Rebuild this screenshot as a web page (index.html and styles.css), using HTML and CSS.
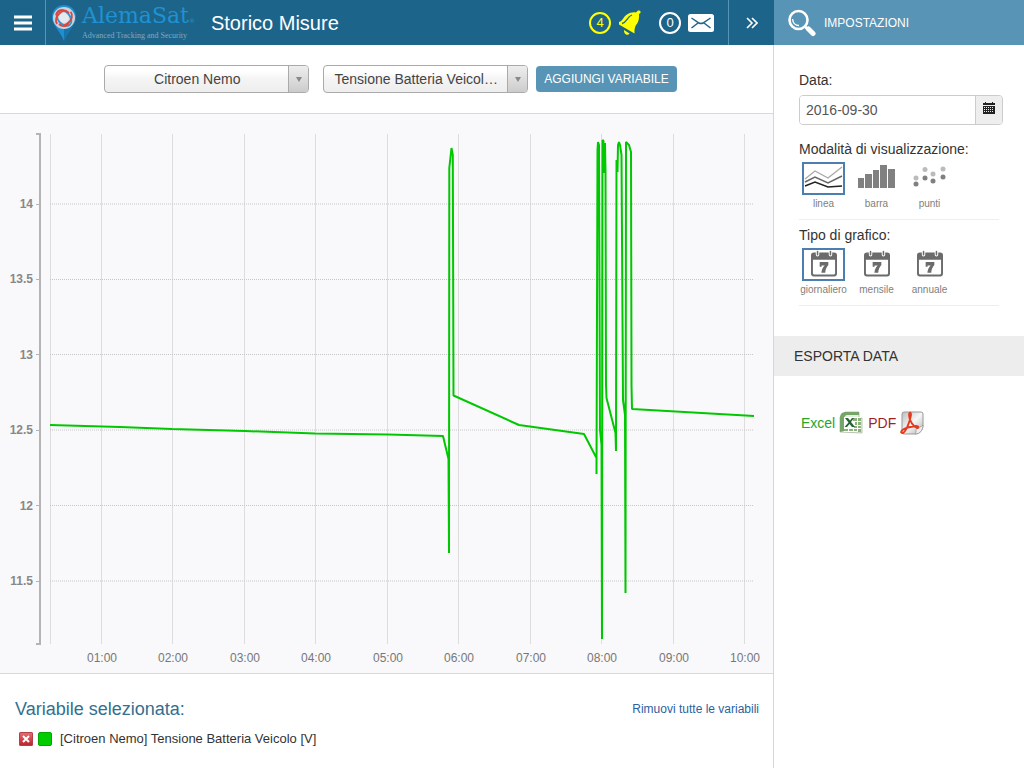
FILE: index.html
```html
<!DOCTYPE html>
<html lang="it">
<head>
<meta charset="utf-8">
<title>Storico Misure</title>
<link rel="stylesheet" href="styles.css">
</head>
<body>
<svg class="sprite" aria-hidden="true">
  <symbol id="calendar" viewBox="0 0 27 27">
    <path fill="#6b6b6b" fill-rule="evenodd" d="M3 2h2v2.500a1.800 1.800 0 0 0 3.600 0V2h9.800v2.500a1.800 1.800 0 0 0 3.600 0V2h2a3 3 0 0 1 3 3v19a3 3 0 0 1-3 3H3a3 3 0 0 1-3-3V5a3 3 0 0 1 3-3zM2 9.500v14a1.500 1.500 0 0 0 1.500 1.500h20A1.500 1.500 0 0 0 25 23.500v-14z"/>
    <path stroke="#6b6b6b" stroke-width="1.600" stroke-linecap="round" d="M6.800 1v3.500M20.200 1v3.500"/>
    <path fill="#6b6b6b" d="M9 12h9v3c-2 2.200-3 4.600-3.200 8h-4c.2-3 1.400-5.500 3.400-7.500H11V17H9z"/>
  </symbol>
</svg>
<div class="app">
  <main class="main">
    <header class="topbar">
      <button class="menu" aria-label="Menu"><svg width="18" height="16" viewBox="0 0 18 16"><path stroke="#fff" stroke-width="3" d="M0 2h18M0 8h18M0 14h18"/></svg></button>
      <div class="logo">
        <svg width="26" height="38" viewBox="0 0 26 38">
          <path fill="#1e8fd0" d="M13 1C6 1 1 6.500 1 13c0 8 7 12 12 24 5-12 12-16 12-24C25 6.500 20 1 13 1z"/>
          <path fill="#1675ad" d="M13 25v12c5-12 12-16 12-24z"/>
          <circle cx="13" cy="14" r="11" fill="#c8d3dc"/>
          <circle cx="13" cy="14" r="5" fill="#e3e9ed"/>
          <g fill="none" stroke-width="1.800">
            <ellipse cx="13" cy="14" rx="9" ry="6" transform="rotate(50 13 14)" stroke="#2798d4"/>
            <ellipse cx="13" cy="14" rx="9" ry="6.500" transform="rotate(-40 13 14)" stroke="#e2443d" stroke-dasharray="17 7"/>
            <path stroke="#e2443d" d="M5 11c2-6 9-6 13-2M8 20c4 4 9 2 10-2"/>
          </g>
        </svg>
        <div class="brand"><span class="brand-name">AlemaSat<small>®</small></span><span class="brand-tag">Advanced Tracking and Security</span></div>
      </div>
      <h1>Storico Misure</h1>
      <div class="alerts">
        <span class="count count-warn">4</span>
        <svg width="24" height="26" viewBox="0 0 24 26"><path fill="#ff0" d="M1 12c4-1 4-5 8-7.500 3-2 6-2.500 9-2L20 .5q2-.5 2.500 1 .8 1.800-1.500 2.500c.5 5-1 9-3 11-1.600 2.500-1.500 5-1.500 8.500L1 14.500zM6 20l5.500 3.500c-1.500 2.500-6 1-5.500-3.500z"/><path fill="none" stroke="#1d648a" stroke-width="1.300" d="M4 13.500c5-1 5-7 10-8.500"/></svg>
        <span class="count">0</span>
        <svg width="26" height="18" viewBox="0 0 26 18"><rect width="26" height="18" rx="2.500" fill="#fff"/><path fill="none" stroke="#1d648a" stroke-width="1.500" d="M3.500 4l7.500 5q2 1.200 4 0l7.500-5M3.500 14l6.500-5M22.500 14L16 9"/></svg>
      </div>
      <button class="collapse" aria-label="Chiudi pannello"><svg width="12" height="12" viewBox="0 0 12 12"><path fill="none" stroke="#fff" stroke-width="1.600" d="M1 1l5 5-5 5M6 1l5 5-5 5"/></svg></button>
    </header>

    <form class="filters">
      <span class="select"><select aria-label="Veicolo"><option>Citroen Nemo</option></select></span>
      <span class="select"><select aria-label="Variabile"><option>Tensione Batteria Veicol…</option></select></span>
      <button class="add" type="button">AGGIUNGI VARIABILE</button>
    </form>

    <section class="chart">
      <svg viewBox="0 114 773 559" role="img" aria-label="Tensione Batteria Veicolo">
        <g stroke="#ddd" shape-rendering="crispEdges">
          <path d="M50.500 134V644M101.500 134V644M172.500 134V644M244.500 134V644M315.500 134V644M387.500 134V644M458.500 134V644M530.500 134V644M601.500 134V644M673.500 134V644M744.500 134V644"/>
        </g>
        <path stroke="#c6c6c8" stroke-dasharray="1 1" d="M50 204H754M50 279.500H754M50 354.500H754M50 430H754M50 505.500H754M50 581H754"/>
        <path fill="none" stroke="#b4b4b4" stroke-width="2" d="M36 134H40V644H36"/>
        <path stroke="#b4b4b4" d="M36 204.500H40M36 279.500H40M36 354.500H40M36 430.500H40M36 505.500H40M36 581.500H40"/>
        <g class="y-labels">
          <text x="33" y="208">14</text><text x="33" y="283">13.5</text><text x="33" y="359">13</text><text x="33" y="434">12.5</text><text x="33" y="510">12</text><text x="33" y="585">11.5</text>
        </g>
        <g class="x-labels">
          <text x="102" y="662">01:00</text><text x="173" y="662">02:00</text><text x="245" y="662">03:00</text><text x="316" y="662">04:00</text><text x="388" y="662">05:00</text><text x="459" y="662">06:00</text><text x="531" y="662">07:00</text><text x="602" y="662">08:00</text><text x="674" y="662">09:00</text><text x="745" y="662">10:00</text>
        </g>
        <path fill="none" stroke="#00c800" stroke-width="2" stroke-linejoin="bevel" d="M50 425L120 427L172 429L245 431L315 433.500L388 434.500L443 436L448.500 459L449 553L449.300 168L451.500 148L452.800 155L453.500 395.500L519 425L584 434L596.500 458V474L597.500 150L598 142L599 145L600 430L601.500 445L602 639L602.500 140L603.500 141L604 173L605 143L605.500 172L606 385L606.500 398L615.500 433L616 451L616.500 160L617.500 172L618 145L619 142L620 145L621.500 155L623 400L625 415L625.500 593L626 142L629 145L631 152L631.500 385L632 409L754 416"/>
      </svg>
    </section>

    <section class="selected">
      <div class="selected-head"><h2>Variabile selezionata:</h2><a href="#">Rimuovi tutte le variabili</a></div>
      <div class="variable">
        <button class="remove" aria-label="Rimuovi"><svg width="14" height="14" viewBox="0 0 14 14"><path stroke="#fff" stroke-width="2" d="M4 4l6 6M10 4l-6 6"/></svg></button>
        <span class="swatch"></span>
        <span>[Citroen Nemo] Tensione Batteria Veicolo [V]</span>
      </div>
    </section>
  </main>

  <aside class="side">
    <header class="side-head">
      <svg width="30" height="28" viewBox="0 0 30 28"><circle cx="10.500" cy="11" r="9" fill="none" stroke="#fff" stroke-width="2.600"/><path fill="none" stroke="#fff" stroke-width="1.400" d="M4.500 10c.5 4 3 6.500 6.500 6.500"/><path stroke="#fff" stroke-width="3" d="M16.500 17l3 3"/><path stroke="#fff" stroke-width="5" stroke-linecap="round" d="M20.500 20l4.500 4.500"/></svg>
      <h2>IMPOSTAZIONI</h2>
    </header>
    <form class="settings">
      <label class="title" for="date">Data:</label>
      <div class="date">
        <input id="date" type="text" value="2016-09-30">
        <button type="button" aria-label="Calendario"><svg width="12" height="13" viewBox="0 0 12 13"><path fill="#222" d="M0 1h2V0h1v1h6V0h1v1h2v11H0z"/><path stroke="#eee" d="M0 3.500h12"/><path stroke="#eee" stroke-dasharray="1 1" d="M1 5.500h10M1 7.500h10M1 9.500h10"/></svg></button>
      </div>
      <fieldset>
        <legend class="title">Modalità di visualizzazione:</legend>
        <div class="choices">
          <label><input type="radio" name="mode" checked><span class="icon"><svg width="39" height="27" viewBox="0 0 39 27"><g fill="none" stroke-width="1.400"><path stroke="#aaa" d="M1 15l10-8 13 7L38 3"/><path stroke="#666" d="M1 18l10-5 13 6 14-7"/><path stroke="#222" d="M1 22l10-4 13 5 14-1"/></g></svg></span>linea</label>
          <label><input type="radio" name="mode"><span class="icon"><svg width="39" height="27" viewBox="0 0 39 27"><path fill="#808080" d="M1 14h6v10H1zM8 10h7v14H8zM16 6h6v18h-6zM23 1h7v23h-7zM31 5h7v19h-7z"/></svg></span>barra</label>
          <label><input type="radio" name="mode"><span class="icon"><svg width="39" height="27" viewBox="0 0 39 27"><g fill="#bbb"><circle cx="6" cy="14" r="2.500"/><circle cx="15" cy="5.500" r="2.500"/><circle cx="23" cy="10" r="2.500"/><circle cx="33" cy="5" r="2.500"/></g><g fill="#808080"><circle cx="6" cy="20" r="2.500"/><circle cx="15" cy="14" r="2.500"/><circle cx="23" cy="17" r="2.500"/><circle cx="33" cy="13" r="2.500"/></g></svg></span>punti</label>
        </div>
      </fieldset>
      <fieldset>
        <legend class="title">Tipo di grafico:</legend>
        <div class="choices">
          <label><input type="radio" name="period" checked><span class="icon"><svg width="26" height="27"><use href="#calendar"/></svg></span>giornaliero</label>
          <label><input type="radio" name="period"><span class="icon"><svg width="26" height="27"><use href="#calendar"/></svg></span>mensile</label>
          <label><input type="radio" name="period"><span class="icon"><svg width="26" height="27"><use href="#calendar"/></svg></span>annuale</label>
        </div>
      </fieldset>
    </form>
    <h2 class="export-head">ESPORTA DATA</h2>
    <div class="export">
      <a class="excel" href="#">Excel
        <svg width="24" height="24" viewBox="0 0 24 24"><path fill="#e6eee2" stroke="#a9b8a3" stroke-width=".8" d="M6 1h14v6h3v15l-22-1V6z"/><path fill="#75a568" d="M1 7c0-4 2-6 6-6h13v3H9C6 4 5 6 5 9v11l-4 1z"/><path fill="#fff" d="M5 6h17v15H5z"/><path fill="#8cb27c" d="M14 7h4v3h-4zM19 7h3v3h-3zM16 11h2v3h-2zM19 11h3v3h-3zM15 15h3v2h-3zM19 15h3v2h-3zM5 18h4v2H5zM10 18h4v2h-4zM15 18h3v2h-3zM19 18h3v3h-3z"/><path fill="#286335" d="M6 7h3l2 2.500L13 7h2l-3 4 4 5h-3l-2.500-3L8 16H5.500l4-4.500z"/></svg></a>
      <a class="pdf" href="#">PDF
        <svg width="24" height="24" viewBox="0 0 24 24"><defs><linearGradient id="paper" x2="1" y2="1"><stop stop-color="#bdbdbd"/><stop offset=".5" stop-color="#f7f7f7"/><stop offset="1" stop-color="#b0b0b0"/></linearGradient></defs><path fill="url(#paper)" stroke="#999" d="M4 1h17q2 0 2 2v11c0 5-3 9-8 9H4q-2 0-2-2V3q0-2 2-2z"/><path fill="#eee" stroke="#999" stroke-width=".8" d="M15 23c2-2 0-5 2-6 2-.6 4-1 6-3 0 5-3 9-8 9z"/><path fill="none" stroke="#e33a1d" stroke-width="1.800" stroke-linejoin="round" d="M1 21c1-3 6-5 15-6 3 0 3 2 1 2-3-1-8-7-8-13 0-3 2-3 2 0-1 7-6 19-9 18z"/></svg></a>
    </div>
  </aside>
</div>
</body>
</html>
```
FILE: styles.css
```css
* { box-sizing: border-box; }
body { margin: 0; background: #fff; color: #333; font: 14px/20px "Liberation Sans", Arial, sans-serif; }
h1, h2 { margin: 0; font-weight: 400; }
button, input, select { font: inherit; color: inherit; }
button { padding: 0; border: 0; background: none; }
a { text-decoration: none; }
svg { display: block; flex: none; }
.sprite { display: none; }

.app { display: grid; grid-template-columns: minmax(0, 1fr) 250px; min-height: 100vh; }
.main { display: flex; flex-direction: column; box-shadow: inset -1px 0 #d6d6d6; }

.topbar { display: flex; align-items: center; height: 45px; background: #1d648a; color: #fff; }
.menu { display: flex; align-items: center; justify-content: center; width: 46px; height: 100%; border-right: 1px solid #5894b4; }
.logo { display: flex; align-items: center; gap: 5px; padding-left: 5px; }
.brand { display: flex; flex-direction: column; }
.brand-name { color: #1e92d2; font: 22px/20px "DejaVu Serif", serif; white-space: nowrap; }
.brand-name small { font-size: 6px; }
.brand-tag { color: #7fa9c4; font: 8px/9px "Liberation Serif", serif; white-space: nowrap; }
.topbar h1 { margin-left: 16px; font-size: 20px; line-height: 24px; white-space: nowrap; }
.alerts { display: flex; align-items: center; gap: 7px; margin-left: auto; padding-right: 14px; }
.count { display: flex; align-items: center; justify-content: center; width: 22px; height: 22px; border: 2px solid #fff; border-radius: 50%; font-size: 13px; }
.count:not(.count-warn) { margin-left: 10px; }
.count-warn { border-color: #ff0; color: #ff0; }
.collapse { display: flex; align-items: center; justify-content: center; width: 46px; height: 100%; border-left: 1px solid #5894b4; }

.filters { display: flex; align-items: center; justify-content: center; height: 69px; padding-left: 8px; border-bottom: 1px solid #d9d9dc; margin-right: 1px; }
.select { position: relative; width: 205px; margin-right: 14px; }
.select + .add { margin-left: -6px; }
.select select { appearance: none; display: block; width: 100%; height: 28px; padding: 0 24px 0 5px; border: 1px solid #aaa; border-radius: 4px; background: linear-gradient(#fff 20%, #f4f4f4 50%, #eee); color: #444; text-align: center; }
.select::before { content: ""; position: absolute; top: 1px; right: 1px; bottom: 1px; width: 19px; border-left: 1px solid #aaa; border-radius: 0 3px 3px 0; background: linear-gradient(#eee, #ccc); pointer-events: none; }
.select::after { content: ""; position: absolute; top: 12px; right: 7px; border: 3px solid transparent; border-top: 5px solid #888; border-bottom: 0; pointer-events: none; }
.add { height: 26px; padding: 0 8px; border-radius: 4px; background: #5894b5; color: #fff; font-size: 12px; white-space: nowrap; }

.chart { margin-right: 1px; border-bottom: 1px solid #d9d9dc; background: #f9f9fb; }
.chart svg { width: 100%; height: auto; }
.y-labels { fill: #888; font-size: 12px; font-weight: 700; text-anchor: end; }
.x-labels { fill: #777; font-size: 12px; text-anchor: middle; }

.selected { padding: 24px 15px; }
.selected-head { display: flex; align-items: center; justify-content: space-between; margin-bottom: 9px; }
.selected h2 { color: #31708f; font-size: 18px; line-height: 22px; }
.selected a { color: #2e5f9e; font-size: 12px; }
.variable { display: flex; align-items: center; gap: 5px; padding-left: 4px; font-size: 13px; line-height: 20px; }
.variable span:last-child { margin-left: 3px; }
.remove { width: 14px; height: 14px; border-radius: 2px; background: linear-gradient(#e57373, #b8202c); box-shadow: inset 0 0 0 1px #b5404a; }
.swatch { width: 14px; height: 14px; border: 1px solid #00a800; border-radius: 2px; background: #0c0; }

.side-head { display: flex; align-items: center; gap: 6px; height: 45px; padding-left: 14px; background: #5894b5; color: #fff; }
.side-head h2 { font-size: 12px; }
.settings { padding: 25px 25px 0; }
.title { display: block; padding: 0; line-height: 20px; }
.date { display: flex; width: 204px; height: 30px; margin: 5px 0 14px; border: 1px solid #ccc; border-radius: 4px; overflow: hidden; }
.date input { flex: 1; min-width: 0; padding: 0 6px; border: 0; color: #555; background: #fff; }
.date button { display: flex; justify-content: center; width: 27px; padding-top: 6px; border-left: 1px solid #ccc; background: #eee; }
fieldset { margin: 0 0 5px; padding: 0 0 6px; border: 0; border-bottom: 1px solid #eee; min-width: 0; }
.choices { display: flex; gap: 10px; padding: 3px 0 0 3px; }
.choices label { display: flex; flex-direction: column; align-items: center; width: 43px; color: #808080; font-size: 10px; line-height: 18px; white-space: nowrap; }
.choices input { position: absolute; opacity: 0; pointer-events: none; }
.icon { display: flex; align-items: flex-start; justify-content: center; width: 43px; height: 33px; border: 2px solid transparent; }
input:checked + .icon { border-color: #4a7fb0; }
.export-head { margin-top: 30px; padding-left: 20px; background: #ededed; font-size: 14px; line-height: 40px; }
.export { display: flex; gap: 5px; padding: 35px 27px; }
.export a { display: flex; align-items: center; gap: 4px; }
.excel { color: #28a428; }
.pdf { color: #a41e22; }
```
